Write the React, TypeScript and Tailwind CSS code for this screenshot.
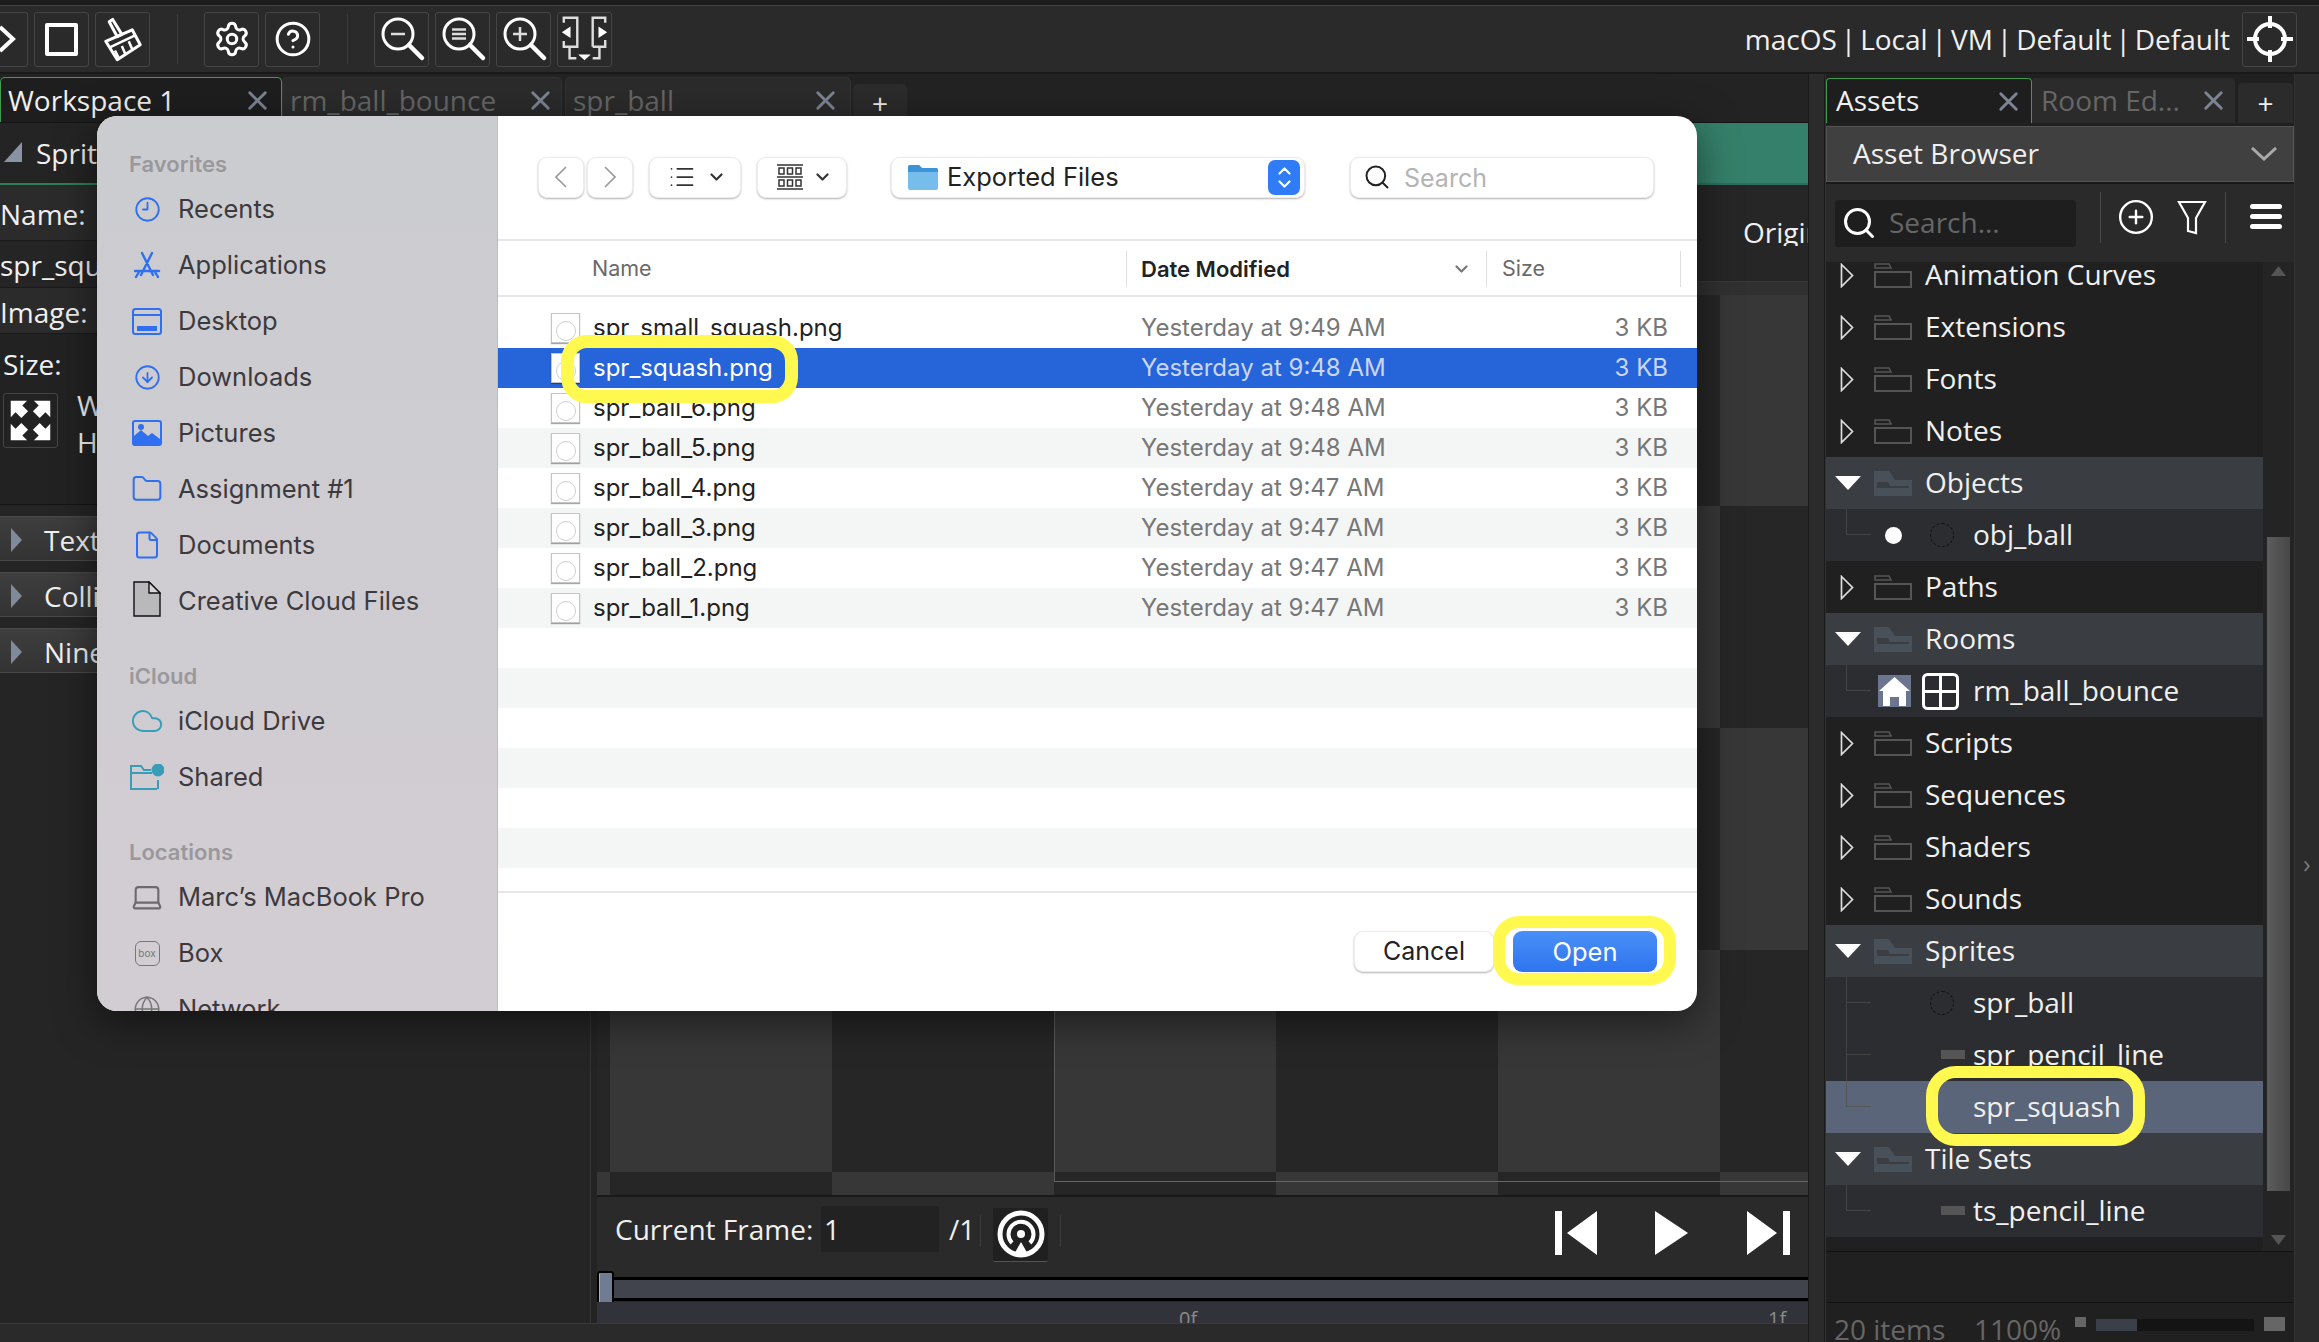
import {
  CircleArrowDown,
  CircleHelp,
  CirclePlus,
  Clock9,
  Cloud,
  File,
  Folder,
  Globe,
  Laptop,
  List,
  Search,
  Settings,
  X,
} from "lucide-react";
import type { ReactNode } from "react";

const ui = "font-['Open_Sans',sans-serif]";
const mac = "font-['Inter',sans-serif]";

function ToolBtn({ children, cls = "w-[55px]" }: { children?: ReactNode; cls?: string }) {
  return (
    <div className={`h-[55px] ${cls} shrink-0 flex items-center justify-center border border-[#454545] rounded-[3px] text-white`}>
      {children}
    </div>
  );
}

function ZoomIcon({ mark }: { mark: string }) {
  return (
    <svg width="53" height="53" viewBox="0 0 53 53" fill="none" stroke="#fff" strokeWidth="3">
      <circle cx="23" cy="21" r="15" />
      <path d="M34 32 47 45" strokeWidth="4.500" strokeLinecap="round" />
      <path d={mark} stroke="#ddd" strokeWidth="2.500" />
    </svg>
  );
}

function ClosedFolder() {
  return (
    <svg width="38" height="25" viewBox="0 0 38 25" className="shrink-0" fill="none" stroke="#555" strokeWidth="2">
      <path d="M1 9h36v15H1z" />
      <path d="M1 5V1h14l2 4z" strokeWidth="1.600" />
    </svg>
  );
}

function OpenFolder() {
  return (
    <svg width="38" height="25" viewBox="0 0 38 25" className="shrink-0">
      <path d="M0 0h15l6 9h17v16H0z" fill="#48505a" />
      <path d="M3 11h11l2 4h19v2H3z" fill="#3a3d42" />
    </svg>
  );
}

function DashedBall() {
  return <div className="w-[24px] h-[24px] rounded-full border border-dashed border-[#111] shrink-0" />;
}

function PencilLine() {
  return <div className="w-[24px] h-[9px] bg-[#555] shrink-0 -mt-[2px]" />;
}

type TreeRow = {
  label: string;
  kind: "closed" | "open" | "child";
  slot?: ReactNode;
  through?: boolean;
  selected?: boolean;
};

const tree: TreeRow[] = [
  { label: "Animation Curves", kind: "closed" },
  { label: "Extensions", kind: "closed" },
  { label: "Fonts", kind: "closed" },
  { label: "Notes", kind: "closed" },
  { label: "Objects", kind: "open" },
  {
    label: "obj_ball",
    kind: "child",
    slot: (
      <>
        <div className="w-[17px] h-[17px] rounded-full bg-white ml-[14px] mr-[28px] shrink-0" />
        <DashedBall />
      </>
    ),
  },
  { label: "Paths", kind: "closed" },
  { label: "Rooms", kind: "open" },
  {
    label: "rm_ball_bounce",
    kind: "child",
    slot: (
      <>
        <div className="w-[33px] h-[32px] bg-[#6b7590] ml-[7px] mr-[11px] shrink-0 flex items-center justify-center">
          <svg width="31" height="30" viewBox="0 0 31 30" fill="#fff">
            <path d="M15.500 1 31 15h-4v15h-7v-9h-9v9H4V15H0z" />
          </svg>
        </div>
        <svg width="37" height="37" viewBox="0 0 37 37" fill="none" stroke="#fff" strokeWidth="3" className="shrink-0">
          <rect x="1.500" y="1.500" width="34" height="34" rx="4" />
          <path d="M18.500 2v33M2 18.500h33" />
        </svg>
      </>
    ),
  },
  { label: "Scripts", kind: "closed" },
  { label: "Sequences", kind: "closed" },
  { label: "Shaders", kind: "closed" },
  { label: "Sounds", kind: "closed" },
  { label: "Sprites", kind: "open" },
  {
    label: "spr_ball",
    kind: "child",
    through: true,
    slot: (
      <div className="ml-[59px]">
        <DashedBall />
      </div>
    ),
  },
  {
    label: "spr_pencil_line",
    kind: "child",
    through: true,
    slot: (
      <div className="ml-[70px]">
        <PencilLine />
      </div>
    ),
  },
  { label: "spr_squash", kind: "child", selected: true },
  { label: "Tile Sets", kind: "open" },
  {
    label: "ts_pencil_line",
    kind: "child",
    slot: (
      <div className="ml-[70px]">
        <PencilLine />
      </div>
    ),
  },
];

function AssetRow({ row }: { row: TreeRow }) {
  if (row.kind === "child") {
    return (
      <div className={`h-[52px] flex items-center relative shrink-0 ${row.selected ? "bg-[#5a657a]" : "bg-[#2b2d30]"}`}>
        <div className="ml-[20px] w-[25px] h-[52px] shrink-0 relative">
          <div className={`h-[26px] border-l border-b ${row.selected ? "border-[#555]" : "border-[#444]"}`} />
          {row.through && <div className="absolute left-0 top-[26px] h-[26px] border-l border-[#444]" />}
        </div>
        <div className="w-[102px] shrink-0 flex items-center">{row.slot}</div>
        <span className="text-[28px] leading-none text-[#f0f0f0] whitespace-nowrap -mt-[2px]">{row.label}</span>
      </div>
    );
  }
  const open = row.kind === "open";
  return (
    <div className={`h-[52px] flex items-center shrink-0 ${open ? "bg-[#3a3d42]" : ""}`}>
      <div className="w-[48px] shrink-0 flex justify-center">
        {open ? (
          <svg width="26" height="14" viewBox="0 0 26 14" fill="#fff" className="ml-[-5px]">
            <path d="M0 0h26L13 14z" />
          </svg>
        ) : (
          <svg width="14" height="25" viewBox="0 0 14 25" fill="none" stroke="#ddd" strokeWidth="1.700" className="ml-[-7px]">
            <path d="M1.500 1.500 12.500 12.500 1.500 23.500z" />
          </svg>
        )}
      </div>
      {open ? <OpenFolder /> : <ClosedFolder />}
      <span className="ml-[13px] text-[28px] leading-none text-[#f0f0f0] whitespace-nowrap -mt-[2px]">{row.label}</span>
    </div>
  );
}

const favorites: [string, ReactNode][] = [
  ["Recents", <Clock9 key="r" size={27} strokeWidth={1.6} />],
  [
    "Applications",
    <svg key="a" width="28" height="28" viewBox="0 0 28 28" fill="none" stroke="currentColor" strokeWidth="2.400" strokeLinecap="round">
      <path d="M9 2l11 22M19 2 8 24M2 20h24M3 26l3-5M25 26l-3-5" />
    </svg>,
  ],
  [
    "Desktop",
    <svg key="d" width="30" height="27" viewBox="0 0 30 27" fill="none" stroke="currentColor" strokeWidth="2">
      <rect x="1" y="1" width="28" height="25" rx="2.500" />
      <path d="M1 7h28" />
      <path d="M6 19h18v3H6z" fill="currentColor" />
    </svg>,
  ],
  ["Downloads", <CircleArrowDown key="dl" size={27} strokeWidth={1.6} />],
  [
    "Pictures",
    <svg key="p" width="30" height="26" viewBox="0 0 30 26" fill="currentColor">
      <path fillRule="evenodd" d="M3 0h24a3 3 0 0 1 3 3v20a3 3 0 0 1-3 3H3a3 3 0 0 1-3-3V3a3 3 0 0 1 3-3zm0 2a1 1 0 0 0-1 1v13l7-6 7 6 4-3 8 6V3a1 1 0 0 0-1-1z" />
      <circle cx="9" cy="7" r="3" />
    </svg>,
  ],
  ["Assignment #1", <Folder key="f" size={32} strokeWidth={1.5} />],
  ["Documents", <File key="doc" size={30} strokeWidth={1.6} />],
  [
    "Creative Cloud Files",
    <svg key="cc" width="28" height="36" viewBox="0 0 28 36" className="-mt-[4px]">
      <path d="M1 1h15l11 11v23H1z" fill="#b9b8bb" stroke="#111" strokeWidth="1.400" />
      <path d="M16 1v11h11z" fill="#d8d6da" stroke="#111" strokeWidth="1.400" />
    </svg>,
  ],
];

function SideItem({ label, icon, color }: { label: string; icon: ReactNode; color: string }) {
  return (
    <div className="h-[56px] flex items-center shrink-0">
      <div className={`w-[34px] ml-[33px] mr-[14px] flex justify-center shrink-0 ${color}`}>{icon}</div>
      <span className="text-[25.500px] text-[#3c3a3e] whitespace-nowrap leading-none">{label}</span>
    </div>
  );
}

function SideHead({ label, cls }: { label: string; cls: string }) {
  return (
    <div className={`pl-[32px] text-[22px] font-semibold text-[#9a989c] leading-none shrink-0 ${cls}`}>{label}</div>
  );
}

function MacBtn({ children, cls }: { children: ReactNode; cls: string }) {
  return (
    <div className={`h-[41px] shrink-0 bg-white rounded-[9px] border border-[#ececec] shadow-[0_1px_2px_rgba(0,0,0,0.3)] flex items-center ${cls}`}>
      {children}
    </div>
  );
}

function Chevron({ up }: { up?: boolean }) {
  return (
    <svg width="13" height="8" viewBox="0 0 13 8" fill="none" stroke="currentColor" strokeWidth="2.200" strokeLinecap="round" strokeLinejoin="round">
      <path d={up ? "M1.500 6.500 6.500 1.500 11.500 6.500" : "M1.500 1.500 6.500 6.500 11.500 1.500"} />
    </svg>
  );
}

const files = [
  ["spr_small_squash.png", "Yesterday at 9:49 AM"],
  ["spr_squash.png", "Yesterday at 9:48 AM"],
  ["spr_ball_6.png", "Yesterday at 9:48 AM"],
  ["spr_ball_5.png", "Yesterday at 9:48 AM"],
  ["spr_ball_4.png", "Yesterday at 9:47 AM"],
  ["spr_ball_3.png", "Yesterday at 9:47 AM"],
  ["spr_ball_2.png", "Yesterday at 9:47 AM"],
  ["spr_ball_1.png", "Yesterday at 9:47 AM"],
];

function FileIcon() {
  return (
    <div className="w-[29px] h-[30px] shrink-0 bg-white border border-[#c4c4c4] shadow-[0_1px_1px_rgba(0,0,0,0.35)] flex items-end justify-center">
      <div className="w-[20px] h-[20px] rounded-full border border-[#cfcfcf] mb-[1px]" />
    </div>
  );
}

function Dialog() {
  return (
    <div className={`absolute left-[97px] top-[116px] w-[1600px] h-[895px] rounded-[20px] overflow-hidden flex bg-white shadow-[0_10px_40px_rgba(0,0,0,0.5)] ${mac}`}>
      <div className="w-[401px] shrink-0 h-full flex flex-col overflow-hidden bg-gradient-to-b from-[#cbccd0] to-[#d2cdd2] border-r border-[#bdbcbf]">
        <SideHead label="Favorites" cls="mt-[37px] mb-[6px]" />
        {favorites.map(([label, icon]) => (
          <SideItem key={label} label={label} icon={icon} color={label === "Creative Cloud Files" ? "" : "text-[#2f6ff0]"} />
        ))}
        <SideHead label="iCloud" cls="mt-[36px] mb-[6px]" />
        <SideItem label="iCloud Drive" color="text-[#3a9db8]" icon={<Cloud size={34} strokeWidth={1.4} />} />
        <SideItem
          label="Shared"
          color="text-[#3a9db8]"
          icon={
            <svg width="34" height="26" viewBox="0 0 34 26" fill="none" stroke="currentColor" strokeWidth="2">
              <path d="M27 25H1V2h10l3 4h7M1 9h21M28 16v9" />
              <circle cx="28" cy="6" r="5.500" fill="currentColor" />
            </svg>
          }
        />
        <SideHead label="Locations" cls="mt-[36px] mb-[6px]" />
        <SideItem label="Marc’s MacBook Pro" color="text-[#6c6a6e]" icon={<Laptop size={36} strokeWidth={1.5} />} />
        <SideItem
          label="Box"
          color="text-[#777]"
          icon={
            <div className="w-[25px] h-[25px] rounded-[6px] border border-[#777] text-[10px] leading-[23px] text-center">box</div>
          }
        />
        <SideItem label="Network" color="text-[#777]" icon={<Globe size={28} strokeWidth={1.3} />} />
      </div>

      <div className="flex-1 min-w-0 flex flex-col">
        <div className="h-[125px] shrink-0 flex items-center pl-[40px] pb-[1px] border-b-[2px] border-[#e6e6e6]">
          <MacBtn cls="w-[46px] justify-center text-[#999]">
            <svg width="12" height="22" viewBox="0 0 12 22" fill="none" stroke="currentColor" strokeWidth="1.600">
              <path d="M11 1 1 11l10 10" />
            </svg>
          </MacBtn>
          <MacBtn cls="w-[46px] ml-[3px] justify-center text-[#999]">
            <svg width="12" height="22" viewBox="0 0 12 22" fill="none" stroke="currentColor" strokeWidth="1.600">
              <path d="m1 1 10 10L1 21" />
            </svg>
          </MacBtn>
          <MacBtn cls="w-[92px] ml-[16px] justify-center gap-[14px] text-[#333]">
            <List size={28} strokeWidth={1.5} />
            <Chevron />
          </MacBtn>
          <MacBtn cls="w-[90px] ml-[16px] justify-center gap-[12px] text-[#333]">
            <svg width="28" height="28" viewBox="0 0 28 28" fill="none" stroke="currentColor" strokeWidth="1.500">
              <path d="M1 2h26M1 14h26M1 26h26" />
              <path d="M3 5h5v6H3zM11.500 5h5v6h-5zM20 5h5v6h-5zM3 17h5v6H3zM11.500 17h5v6h-5zM20 17h5v6h-5z" />
            </svg>
            <Chevron />
          </MacBtn>
          <MacBtn cls="w-[414px] ml-[44px] pl-[16px] pr-[4px] text-[#222]">
            <svg width="30" height="26" viewBox="0 0 30 26" className="shrink-0">
              <path d="M0 3a2 2 0 0 1 2-2h9l3 3h14a2 2 0 0 1 2 2v18a2 2 0 0 1-2 2H2a2 2 0 0 1-2-2z" fill="#77bdeb" />
              <path d="M0 3a2 2 0 0 1 2-2h9l3 3h14a2 2 0 0 1 2 2v2H0z" fill="#3d93d6" />
            </svg>
            <span className="ml-[9px] text-[25.500px] leading-none whitespace-nowrap flex-1">Exported Files</span>
            <div className="w-[32px] h-[35px] rounded-[7px] bg-[#2f7cf6] text-white flex flex-col items-center justify-center gap-[5px]">
              <Chevron up />
              <Chevron />
            </div>
          </MacBtn>
          <MacBtn cls="w-[304px] ml-[45px] pl-[12px] text-[#222]">
            <Search size={28} strokeWidth={1.7} />
            <span className="ml-[13px] mt-[2px] text-[25px] leading-none text-[#b4b4b4]">Search</span>
          </MacBtn>
        </div>

        <div className="h-[56px] shrink-0 flex items-center pt-[2px] border-b-[2px] border-[#e6e6e6] text-[21.500px] leading-none">
          <div className="w-[628px] pl-[94px] text-[#6a6a6a] shrink-0">Name</div>
          <div className="w-[361px] h-[36px] shrink-0 flex items-center justify-between pl-[14px] pr-[18px] border-x border-[#e0e0e0]">
            <span className="font-semibold text-[#222] text-[22px]">Date Modified</span>
            <span className="text-[#777]">
              <Chevron />
            </span>
          </div>
          <div className="w-[194px] h-[36px] shrink-0 flex items-center pl-[15px] text-[#6a6a6a] border-r border-[#e0e0e0]">Size</div>
        </div>

        <div className="h-[594px] shrink-0 pt-[11px] flex flex-col overflow-hidden">
          {Array.from({ length: 14 }).map((_, i) => {
            const f = files[i];
            const sel = i === 1;
            const stripe = i % 2 === 1 && !sel && i >= 3 ? "bg-[#f4f5f5]" : "";
            return (
              <div key={i} className={`h-[40px] shrink-0 flex items-center text-[24px] leading-none ${sel ? "bg-[#2664d9]" : stripe}`}>
                {f && (
                  <>
                    <div className="ml-[53px] mr-[13px] shrink-0">
                      <FileIcon />
                    </div>
                    <span className={`w-[548px] shrink-0 whitespace-nowrap ${sel ? "text-white" : "text-[#222]"}`}>{f[0]}</span>
                    <span className={`w-[400px] shrink-0 whitespace-nowrap ${sel ? "text-[#c9d6f5]" : "text-[#777]"}`}>{f[1]}</span>
                    <span className={`w-[127px] text-right shrink-0 whitespace-nowrap ${sel ? "text-[#c9d6f5]" : "text-[#777]"}`}>3 KB</span>
                  </>
                )}
              </div>
            );
          })}
        </div>

        <div className="flex-1 border-t-[2px] border-[#e6e6e6] flex items-start justify-end pt-[38px] pr-[40px] gap-[19px]">
          <div className="w-[140px] h-[41px] rounded-[9px] bg-white border border-[#ececec] shadow-[0_1px_2px_rgba(0,0,0,0.3)] flex items-center justify-center text-[25px] leading-none text-[#222]">
            Cancel
          </div>
          <div className="w-[144px] h-[41px] rounded-[9px] bg-gradient-to-b from-[#4a90f8] to-[#2e74ef] flex items-center justify-center text-[25.500px] leading-none text-white">
            Open
          </div>
        </div>
      </div>
    </div>
  );
}

function WsTab({ label, width, pr, active }: { label: string; width: string; pr: string; active?: boolean }) {
  return (
    <div className={`${width} ${pr} h-[45px] shrink-0 flex items-center justify-between pl-[7px] rounded-t-[5px] border-t border-x ${active ? "bg-[#1e1e1e] border-[#3f9a53]" : "bg-[#2b2b2b] border-[#333]"}`}>
      <span className={`text-[28px] leading-none whitespace-nowrap ${active ? "text-[#f0f0f0]" : "text-[#666]"}`}>{label}</span>
      <X size={31} strokeWidth={2.2} className="text-[#7d8595] shrink-0" />
    </div>
  );
}

function Checker() {
  return (
    <div className="flex-1 min-h-0 relative bg-[repeating-conic-gradient(#373737_0_25%,#262626_0_50%)] bg-size-[444px_444px] bg-position-[13px_-11px]">
      <div className="absolute left-[457px] top-[-100px] bottom-[13px] w-px bg-[#5a5a5a]" />
      <div className="absolute left-[457px] right-0 bottom-[13px] h-px bg-[#666]" />
    </div>
  );
}

export default function App() {
  return (
    <div className={`w-[2319px] h-[1342px] relative overflow-hidden bg-[#232323] flex flex-col ${ui}`}>
      <div className="h-[6px] shrink-0 border-b border-[#444] bg-[#1c1c1c]" />
      <div className="h-[68px] shrink-0 bg-[#2a2a2a] border-b-[2px] border-[#191919] flex items-center gap-[6px] pl-0 pr-[22px]">
        <div className="w-[28px] h-[55px] shrink-0 border border-l-0 border-[#454545] rounded-r-[3px] flex items-center">
          <svg width="16" height="28" viewBox="0 0 16 28" fill="none" stroke="#fff" strokeWidth="4">
            <path d="M0 2 13 14 0 26" />
          </svg>
        </div>
        <ToolBtn>
          <div className="w-[33px] h-[33px] border-[4px] border-white rounded-[2px]" />
        </ToolBtn>
        <ToolBtn>
          <svg width="42" height="46" viewBox="14 11 36 40" fill="none" stroke="#fff" strokeWidth="2.600" strokeLinejoin="round">
            <path d="M20 16l3-2 8 13-4 2z" />
            <path d="M17 33l23-10 7 13-20 13z" />
            <path d="M21 38l21-10M25 41l3 6M31 37l3 7M37 33l3 7" strokeWidth="2.200" />
          </svg>
        </ToolBtn>
        <div className="w-px h-[50px] bg-[#3c3c3c] ml-[21px] mr-[20px] shrink-0" />
        <ToolBtn>
          <Settings size={38} strokeWidth={1.9} />
        </ToolBtn>
        <ToolBtn>
          <CircleHelp size={38} strokeWidth={1.9} />
        </ToolBtn>
        <div className="w-px h-[50px] bg-[#3c3c3c] ml-[21px] mr-[20px] shrink-0" />
        <ToolBtn>
          <ZoomIcon mark="M16 21h14" />
        </ToolBtn>
        <ToolBtn>
          <ZoomIcon mark="M16 16.500h14M16 21h14M16 25.500h14" />
        </ToolBtn>
        <ToolBtn>
          <ZoomIcon mark="M16 21h14M23 14v14" />
        </ToolBtn>
        <ToolBtn>
          <svg width="53" height="53" viewBox="0 0 55 55" fill="none" stroke="#ddd" strokeWidth="2.500">
            <path d="M6 10V5h14v30H6v-6M36 35V5h13v5M49 28v7H36M12 36v11h7M43 36v11h-7" />
            <path d="M4 20l9-6v12zM51 20l-9-6v12zM21 43h13l-6.500 6z" fill="#fff" stroke="none" />
          </svg>
        </ToolBtn>
        <span className="ml-auto text-[28px] leading-none text-[#f0f0f0] whitespace-nowrap [word-spacing:-3.300px]">macOS | Local | VM | Default | Default</span>
        <ToolBtn cls="w-[55px] ml-[6px]">
          <svg width="48" height="48" viewBox="0 0 48 48" fill="none" stroke="#fff" strokeWidth="4">
            <circle cx="24" cy="24" r="15" />
            <path d="M24 1v12M24 35v12M1 24h12M35 24h12" />
          </svg>
        </ToolBtn>
      </div>

      <div className="flex-1 min-h-0 flex">
        <div className="w-[1808px] shrink-0 flex flex-col">
          <div className="h-[49px] shrink-0 flex items-end border-b border-[#141414]">
            <WsTab label="Workspace 1" width="w-[282px]" pr="pr-[8px]" active />
            <WsTab label="rm_ball_bounce" width="w-[280px]" pr="pr-[5px]" />
            <div className="w-[3px] shrink-0" />
            <WsTab label="spr_ball" width="w-[286px]" pr="pr-[9px]" />
            <div className="ml-[2px] w-[54px] h-[38px] shrink-0 bg-[#2b2b2b] rounded-t-[5px] flex items-center justify-center text-[#eee] text-[28px] leading-none">+</div>
          </div>
          <div className="flex-1 min-h-0 flex">
            <div className="w-[591px] shrink-0 bg-[#252525] border-r border-[#333] flex flex-col text-[28px] leading-none text-[#f0f0f0]">
              <div className="h-[62px] shrink-0 flex items-center border-b-[2px] border-[#2f7d5a] bg-[#242424]">
                <svg width="18" height="20" viewBox="0 0 18 20" fill="#8a93a3" className="ml-[4px] mt-[-2px] shrink-0">
                  <path d="M18 0v20H0z" />
                </svg>
                <span className="ml-[14px] whitespace-nowrap">Sprite</span>
              </div>
              <div className="h-[56px] shrink-0 flex items-center pt-[3px] bg-[#2b2b2b] border-b border-[#1a1a1a]">Name:</div>
              <div className="h-[47px] shrink-0 flex items-center pt-[2px] bg-[#252525] border-b border-[#1a1a1a]">spr_squash</div>
              <div className="h-[46px] shrink-0 flex items-center pt-[3px] bg-[#2b2b2b] border-b border-[#1a1a1a]">Image:</div>
              <div className="h-[171px] shrink-0 bg-[#222] border-b border-[#141414]">
                <div className="h-[59px] flex items-center pl-[3px]">Size:</div>
                <div className="flex items-start pl-[3px] gap-[19px]">
                  <div className="w-[55px] h-[55px] shrink-0 border border-[#454545] rounded-[3px] flex items-center justify-center">
                    <svg width="53" height="53" viewBox="0 0 55 55" fill="#fff">
                      <path d="M7 7h17l-5 5 6 6-7 7-6-6-5 5z" />
                      <path d="M48 7H31l5 5-6 6 7 7 6-6 5 5z" />
                      <path d="M7 48h17l-5-5 6-6-7-7-6 6-5-5z" />
                      <path d="M48 48H31l5-5-6-6 7-7 6 6 5-5z" />
                    </svg>
                  </div>
                  <div className="flex flex-col gap-[9px] -mt-[2px]">
                    <span>W</span>
                    <span>H</span>
                  </div>
                </div>
              </div>
              {["Texture", "Collision", "Nine Slice"].map((s) => (
                <div key={s} className="h-[45px] mt-[11px] shrink-0 flex items-center pt-[2px] bg-gradient-to-b from-[#3e3e3e] to-[#333] border-y border-[#4a4a4a]">
                  <svg width="11" height="24" viewBox="0 0 11 24" fill="#7f8a9a" className="ml-[11px] mr-[22px] shrink-0">
                    <path d="M0 0 11 12 0 24z" />
                  </svg>
                  {s}
                </div>
              ))}
            </div>
            <div className="flex-1 min-w-0 ml-[6px] flex flex-col">
              <div className="h-[62px] shrink-0 bg-[#35806a] border-b-[2px] border-[#2f6f5c]" />
              <div className="h-[97px] shrink-0 bg-[#262626] border-b border-[#3a3a3a] flex items-center justify-end text-[28px] leading-none text-[#f0f0f0] overflow-hidden">
                <span className="w-[65px] overflow-hidden whitespace-nowrap -mt-[2px]">Origin</span>
              </div>
              <div className="h-[13px] shrink-0 bg-[#303030]" />
              <Checker />
              <div className="h-[77px] shrink-0 bg-[#2a2a2a] border-t-[2px] border-[#191919] flex items-center text-[#f0f0f0] text-[28px] leading-none pb-[8px]">
                <span className="ml-[18px] w-[206px] shrink-0 whitespace-nowrap -mt-[3px]">Current Frame:</span>
                <div className="w-[118px] h-[46px] shrink-0 bg-[#222] pl-[3px] flex items-center -mt-[3px]">1</div>
                <span className="ml-[10px] w-[31px] shrink-0 -mt-[3px]">/1</span>
                <div className="w-px h-[32px] bg-[#3c3c3c] shrink-0" />
                <div className="ml-[12px] w-[55px] h-[54px] shrink-0 bg-[#202020] border-b border-[#555] rounded-[2px] flex items-center justify-center mt-[8px]">
                  <svg width="55" height="54" viewBox="0 0 55 54" fill="none" stroke="#fff">
                    <circle cx="28" cy="27" r="21" strokeWidth="5" />
                    <path d="M19 36A12.500 12.500 0 1 1 37 36" strokeWidth="4" />
                    <circle cx="28" cy="27" r="4" fill="#fff" stroke="none" />
                    <path d="M28 35 36 49H20z" fill="#fff" stroke="none" />
                  </svg>
                </div>
                <div className="ml-[12px] w-px h-[32px] bg-[#3c3c3c] shrink-0" />
                <div className="ml-[494px] flex items-center shrink-0 mt-[5px]">
                  <svg width="42" height="44" viewBox="0 0 42 44" fill="#fff">
                    <path d="M0 0h7v44H0zM42 0v44L12 22z" />
                  </svg>
                  <svg width="33" height="44" viewBox="0 0 33 44" fill="#fff" className="ml-[58px]">
                    <path d="M0 0 33 22 0 44z" />
                  </svg>
                  <svg width="43" height="44" viewBox="0 0 43 44" fill="#fff" className="ml-[59px]">
                    <path d="M0 0 30 22 0 44zM36 0h7v44h-7z" />
                  </svg>
                </div>
              </div>
              <div className="h-[30px] shrink-0 bg-[#2a2a2a] flex items-center relative pt-[3px]">
                <div className="w-full h-[24px] bg-[#41444d] border-y-[3px] border-black" />
                <div className="absolute left-0 top-[-1px] w-[17px] h-[35px] bg-[#6f7c92] border-[2px] border-black rounded-[3px] shadow-[inset_1px_0_0_#e2a93b]" />
              </div>
              <div className="h-[21px] shrink-0 bg-[#32333a] relative overflow-hidden text-[20px] leading-none text-[#8a8a8a]">
                <span className="absolute left-[582px] top-[7px]">0f</span>
                <span className="absolute left-[1171px] top-[7px]">1f</span>
              </div>
            </div>
          </div>
          <div className="h-[19px] shrink-0 bg-[#2a2a2a] border-t border-[#3a3a3a]" />
        </div>

        <div className="w-[17px] shrink-0 bg-[#2b2b2b] border-x border-[#1a1a1a]" />

        <div className="w-[470px] shrink-0 flex flex-col bg-[#202020] border-x border-[#333]">
          <div className="h-[49px] shrink-0 flex items-end">
            <div className="w-[206px] h-[45px] shrink-0 bg-[#1e1e1e] border-t border-x border-[#3f9a53] rounded-t-[4px] flex items-center justify-between pl-[9px] pr-[7px]">
              <span className="text-[28px] leading-none text-[#f0f0f0] -mt-[2px]">Assets</span>
              <X size={31} strokeWidth={2.2} className="text-[#7d8595]" />
            </div>
            <div className="w-[203px] h-[45px] shrink-0 bg-[#2b2b2b] rounded-t-[4px] flex items-center justify-between pl-[9px] pr-[6px]">
              <span className="text-[28px] leading-none text-[#666] whitespace-nowrap -mt-[2px]">Room Ed...</span>
              <X size={31} strokeWidth={2.2} className="text-[#7d8595]" />
            </div>
            <div className="ml-[3px] w-[55px] h-[40px] shrink-0 bg-[#2b2b2b] rounded-t-[4px] flex items-center justify-center text-[#eee] text-[28px] leading-none">+</div>
          </div>
          <div className="h-[56px] mt-[3px] shrink-0 bg-[#404040] border border-[#555] flex items-center justify-between pl-[26px] pr-[16px]">
            <span className="text-[28px] leading-none text-[#f0f0f0] -mt-[2px]">Asset Browser</span>
            <svg width="26" height="14" viewBox="0 0 26 14" fill="none" stroke="#aaa" strokeWidth="3">
              <path d="M1 1 13 12 25 1" />
            </svg>
          </div>
          <div className="h-[80px] shrink-0 bg-[#2a2a2a] flex items-center pl-[9px] border-t-[2px] border-[#191919]">
            <div className="w-[241px] h-[47px] shrink-0 bg-[#1e1e1e] rounded-[3px] flex items-center pl-[7px]">
              <Search size={36} strokeWidth={2} className="text-white -ml-[1px]" />
              <span className="ml-[12px] -mt-[2px] text-[28px] leading-none text-[#666]">Search...</span>
            </div>
            <div className="ml-[24px] w-px h-[51px] -mt-[11px] bg-[#4a4a4a] shrink-0" />
            <CirclePlus size={38} strokeWidth={1.5} className="ml-[16px] -mt-[13px] text-white shrink-0" />
            <svg width="30" height="36" viewBox="0 0 30 36" fill="none" stroke="#fff" strokeWidth="2.200" className="ml-[22px] -mt-[11px] shrink-0">
              <path d="M2 2h26L19 18v15l-8-2V18z" />
            </svg>
            <div className="ml-[18px] w-px h-[51px] -mt-[11px] bg-[#4a4a4a] shrink-0" />
            <div className="ml-[24px] -mt-[13px] w-[32px] shrink-0 flex flex-col gap-[5px]">
              <div className="h-[5px] bg-white rounded-full" />
              <div className="h-[5px] bg-white rounded-full" />
              <div className="h-[5px] bg-white rounded-full" />
            </div>
          </div>
          <div className="h-[990px] shrink-0 flex border-b border-[#111] overflow-hidden">
            <div className="w-[437px] shrink-0 flex flex-col overflow-hidden">
              <div className="-mt-[13px] flex flex-col">
                {tree.map((r) => (
                  <AssetRow key={r.label} row={r} />
                ))}
              </div>
            </div>
            <div className="flex-1 flex flex-col items-center bg-[#242424] pt-[4px]">
              <svg width="15" height="10" viewBox="0 0 15 10" fill="#555" className="shrink-0">
                <path d="M7.500 0 15 10H0z" />
              </svg>
              <div className="w-[23px] h-[654px] mt-[261px] bg-gradient-to-r from-[#5c5c5c] to-[#484848] shrink-0" />
              <svg width="15" height="10" viewBox="0 0 15 10" fill="#555" className="shrink-0 mt-[44px]">
                <path d="M0 0h15L7.500 10z" />
              </svg>
            </div>
          </div>
          <div className="h-[51px] shrink-0 border-b border-[#111]" />
          <div className="flex-1 min-h-0 flex items-start pl-[8px] overflow-hidden">
            <span className="w-[140px] shrink-0 text-[28px] leading-none text-[#666] mt-[12px] whitespace-nowrap">20 items</span>
            <span className="w-[101px] shrink-0 text-[28px] leading-none text-[#666] mt-[12px]">1100%</span>
            <div className="w-[11px] h-[10px] bg-[#666] mt-[14px] shrink-0" />
            <div className="ml-[10px] w-[158px] h-[12px] bg-[#141414] mt-[16px] shrink-0">
              <div className="w-[41px] h-[12px] bg-[#3a3f48]" />
            </div>
            <div className="ml-[10px] w-[21px] h-[14px] bg-[#666] mt-[14px] shrink-0" />
          </div>
        </div>

        <div className="flex-1 bg-[#2b2b2b] flex justify-center pt-[776px]">
          <span className="text-[#777] text-[26px] leading-none">›</span>
        </div>
      </div>

      <Dialog />

      <div className="absolute left-[561px] top-[335px] w-[237px] h-[68px] rounded-[26px] border-[13px] border-[#fff94f]" />
      <div className="absolute left-[1493px] top-[916px] w-[183px] h-[69px] rounded-[26px] border-[12px] border-[#fff94f]" />
      <div className="absolute left-[1926px] top-[1066px] w-[219px] h-[80px] rounded-[30px] border-[12px] border-[#fff94f]" />
    </div>
  );
}
